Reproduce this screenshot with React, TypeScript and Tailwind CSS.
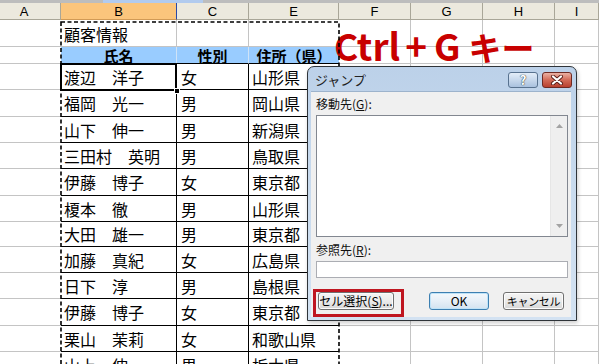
import React from 'react';
import clsx from 'clsx';

const W = ['w-[61px]', 'w-[116px]', 'w-[72px]', 'w-[90px]', 'w-[72px]', 'w-[72px]', 'w-[72px]', 'w-[44px]'];
const LETTERS = ['A', 'B', 'C', 'E', 'F', 'G', 'H', 'I'];

const DATA: [string, string, string][] = [
  ['渡辺　洋子', '女', '山形県'],
  ['福岡　光一', '男', '岡山県'],
  ['山下　伸一', '男', '新潟県'],
  ['三田村　英明', '男', '鳥取県'],
  ['伊藤　博子', '女', '東京都'],
  ['榎本　徹', '男', '山形県'],
  ['大田　雄一', '男', '東京都'],
  ['加藤　真紀', '女', '広島県'],
  ['日下　淳', '男', '島根県'],
  ['伊藤　博子', '女', '東京都'],
  ['栗山　茉莉', '女', '和歌山県'],
  ['山上　伸一', '男', '栃木県'],
];
const HEIGHTS = ['h-[26px]', 'h-[27px]', 'h-[26px]', 'h-[26px]', 'h-[27px]', 'h-[26px]', 'h-[25px]', 'h-[26px]', 'h-[26px]', 'h-[27px]', 'h-[26px]', 'h-[26px]'];

const grid = 'border-r border-b border-[#c4c4c4]';

function Cell({ i, className, children }: { i: number; className?: string; children?: React.ReactNode }) {
  return (
    <div className={clsx('shrink-0 flex items-center whitespace-nowrap overflow-visible', W[i], className)}>
      {children}
    </div>
  );
}

// plain gray gridline cells for the columns outside the table
function Blank({ i }: { i: number }) {
  return <Cell i={i} className={i === 0 ? 'border-b border-[#c4c4c4]' : grid} />;
}

function Button({ children, isDefault, className }: { children: React.ReactNode; isDefault?: boolean; className?: string }) {
  return (
    <div
      className={clsx(
        'h-[18px] flex items-center justify-center whitespace-nowrap rounded-[3px] border leading-none text-black bg-gradient-to-b',
        isDefault
          ? 'border-[#3c7fb1] from-[#f3f8fc] via-[#e6eff7] to-[#d3e3f0] shadow-[inset_0_0_0_1px_#bfe3f8]'
          : 'border-[#707070] from-[#f4f4f4] via-[#ebebeb] to-[#d6d6d6] shadow-[inset_0_0_0_1px_#fcfcfc]',
        className
      )}
    >
      {children}
    </div>
  );
}

export default function App() {
  return (
    <div className="relative w-[599px] h-[364px] overflow-hidden bg-white font-['Noto_Sans_CJK_JP',sans-serif] text-black">
      {/* top strip */}
      <div className="h-[3px] flex bg-[#bdbdbd]">
        <div className="ml-[103px] w-[100px] bg-[#b2cbee]" />
      </div>

      {/* column headers */}
      <div className="flex h-[17px]">
        {LETTERS.map((l, i) => (
          <Cell
            key={l}
            i={i}
            className={clsx(
              "justify-center border-r border-b text-[13px] leading-none font-['Liberation_Sans',sans-serif]",
              i === 1 ? 'bg-[#fbc57c] border-r-[#2a49a8] border-b-[#d19a55]' : 'bg-[#ece9de] border-[#a9a698]',
              i === 0 && 'pr-[12px]'
            )}
          >
            {l}
          </Cell>
        ))}
      </div>

      {/* row 1: title */}
      <div className="flex h-[27px]">
        <Blank i={0} />
        <Cell i={1} className={clsx(grid, 'pl-[3px] pt-[2px] text-[16px] leading-none')}>顧客情報</Cell>
        <Cell i={2} className={grid} />
        <Cell i={3} className="border-b border-[#c4c4c4]" />
        {[4, 5, 6, 7].map((i) => <Blank key={i} i={i} />)}
      </div>

      {/* row 2: table header */}
      <div className="flex h-[17px]">
        <Blank i={0} />
        <Cell i={1} className="justify-center bg-[#99ccff] border-r border-r-[#cfe3f7] border-b border-b-black text-[15px] font-bold leading-none">氏名</Cell>
        <Cell i={2} className="justify-center bg-[#99ccff] border-r border-r-[#cfe3f7] border-b border-b-black text-[15px] font-bold leading-none">性別</Cell>
        <Cell i={3} className="justify-center bg-[#99ccff] border-b border-b-black text-[15px] font-bold leading-none">住所（県）</Cell>
        {[4, 5, 6, 7].map((i) => <Blank key={i} i={i} />)}
      </div>

      {/* data rows */}
      {DATA.map(([name, sex, pref], r) => (
        <div key={r} className={clsx('flex', HEIGHTS[r])}>
          <Blank i={0} />
          <Cell i={1} className="border-r border-b border-black pl-[3px] text-[16px] leading-none">{name}</Cell>
          <Cell i={2} className="border-r border-b border-black pl-[4px] text-[16px] leading-none">{sex}</Cell>
          <Cell i={3} className="border-b border-black pl-[3px] text-[16px] leading-none">{pref}</Cell>
          {[4, 5, 6, 7].map((i) => <Blank key={i} i={i} />)}
        </div>
      ))}

      {/* annotation */}
      <div className="absolute left-[334px] top-[27px] h-[36px] flex items-baseline text-[37px] font-bold leading-[36px] text-[#c80000] whitespace-nowrap">
        <span>Ctrl</span>
        <span className="ml-[5px]">+</span>
        <span className="ml-[7px]">G</span>
        <span className="ml-[8px] text-[33px]">キー</span>
      </div>

      {/* copy marquee around B1:E */}
      <svg className="absolute left-[59px] top-[20px] pointer-events-none" width="284" height="344">
        <rect x="2" y="2" width="278" height="400" fill="none" stroke="#000" strokeWidth="1.6" strokeDasharray="4 2.5" />
      </svg>

      {/* active cell */}
      <div className="absolute left-[60px] top-[63px] w-[117px] h-[28px] border-2 border-black" />
      <div className="absolute left-[174px] top-[88px] w-[6px] h-[6px] bg-black border border-white" />

      {/* jump dialog */}
      <div className="absolute left-[307px] top-[66px] w-[270px] h-[255px] flex flex-col rounded-t-[7px] border border-[#2f3439] bg-gradient-to-b from-[#bcd1e9] via-[#c9dbee] to-[#d3e2f2] shadow-[1px_2px_4px_rgba(0,0,0,0.2)]">
        <div className="h-[24px] shrink-0 flex items-center pl-[7px] pr-[4px]">
          <span className="text-[13px] leading-none text-[#222]">ジャンプ</span>
          <div className="ml-auto flex gap-[4px] pt-[1px]">
            <div className="w-[30px] h-[16px] rounded-[3px] border border-[#58728f] bg-gradient-to-b from-[#e3edf8] via-[#c7d8ec] to-[#a9c1de] flex items-center justify-center text-[13px] font-bold leading-none text-white [text-shadow:0_0_1px_#233,0_0_1px_#233]">
              ?
            </div>
            <div className="w-[30px] h-[16px] rounded-[3px] border border-[#6e2a23] bg-gradient-to-b from-[#eab1a4] via-[#d26a57] to-[#b8402f] flex items-center justify-center">
              <svg width="14" height="10" viewBox="0 0 14 10">
                <path d="M3 1.5 L11 8.5 M11 1.5 L3 8.5" stroke="#5a1e18" strokeWidth="4" strokeLinecap="round" />
                <path d="M3 1.5 L11 8.5 M11 1.5 L3 8.5" stroke="#fff" strokeWidth="2.2" strokeLinecap="round" />
              </svg>
            </div>
          </div>
        </div>

        <div className="flex-1 ml-[3px] mr-[5px] mb-[3px] bg-[#f0f0f0] border-t border-[#9db3cc] pl-[5px] pr-[3px] pt-[4px] flex flex-col text-[12px]">
          <div className="leading-[16px] text-[#111]">
            移動先(<span className="underline">G</span>):
          </div>
          <div className="mt-[3px] h-[122px] border border-[#828790] bg-white flex">
            <div className="flex-1" />
            <div className="w-[17px] bg-[#efefef] border-l border-[#e6e6e6] flex flex-col items-center justify-between py-[8px]">
              <svg width="7" height="4" viewBox="0 0 7 4"><polygon points="3.5,0 7,4 0,4" fill="#a3a3a3" /></svg>
              <svg width="7" height="4" viewBox="0 0 7 4"><polygon points="0,0 7,0 3.5,4" fill="#a3a3a3" /></svg>
            </div>
          </div>
          <div className="mt-[5px] leading-[16px] text-[#111]">
            参照先(<span className="underline">R</span>):
          </div>
          <div className="mt-[3px] h-[17px] border border-[#abadb3] bg-white" />
          <div className="mt-[14px] flex">
            <Button className="ml-[2px] w-[76px] text-[12px]">
              セル選択(<span className="underline">S</span>)...
            </Button>
            <Button isDefault className="ml-[35px] w-[60px] text-[12px]">OK</Button>
            <Button className="ml-[14px] w-[61px] text-[11px] tracking-[-0.3px]">キャンセル</Button>
          </div>
        </div>

        {/* red highlight */}
        <div className="absolute left-[5px] top-[222px] w-[91px] h-[28px] border-[3px] border-[#bf1620]" />
      </div>
    </div>
  );
}
